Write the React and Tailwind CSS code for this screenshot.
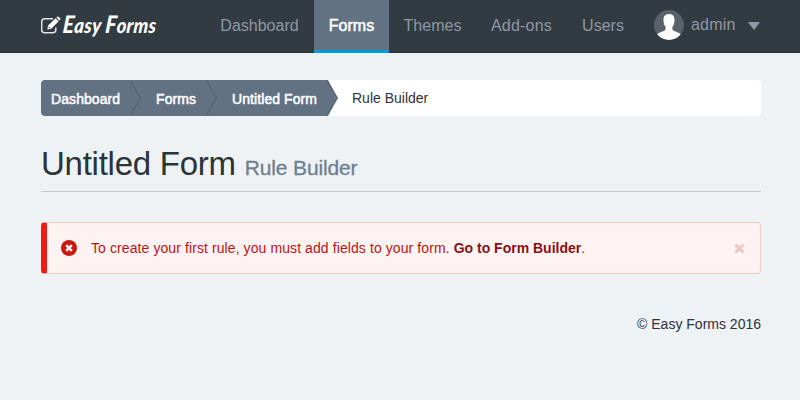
import React from "react";

function Logo() {
  return (
    <a className="flex h-[53px] w-[164px] items-center text-white">
      <svg className="mt-[-4px] h-[18px] w-5 shrink-0" viewBox="0 0 20 18" fill="none">
        <path d="M12 2.7H3.7Q.7 2.7.7 5.7v8.1q0 3 3 3h8.1q3 0 3-3v-2.4" stroke="#e3e5e7" strokeWidth="1.5" />
        <path d="M6.3 13.5l.8-4 7.5-7.3 3.1 3.1-7.4 7.4z" fill="#fff" />
        <path d="M15.4 1.5l.8-.8q.7-.6 1.4 0l1.6 1.6q.6.7 0 1.400l-.8.8z" fill="#fff" />
        <path d="M7.6 10.8l1.5 1.5" stroke="#323a42" strokeWidth="1" />
      </svg>
      <span className="ml-[2px] mt-[-4px] inline-block origin-left -skew-x-6 scale-x-[.88] whitespace-nowrap font-['Lato','Open_Sans',sans-serif] text-[21px] font-black italic leading-6 tracking-[0.3px]">
        <span className="text-[24px]">E</span>asy <span className="text-[24px]">F</span>orms
      </span>
    </a>
  );
}

function NavItem({ children, active, width }) {
  return (
    <a
      className={`flex h-[53px] items-center justify-center text-base ${width} ${
        active
          ? "border-b-[3px] border-[#009fda] bg-[#627282] pt-px text-white [-webkit-text-stroke:0.5px_white]"
          : "pb-px text-[#8f98a3]"
      }`}
    >
      {children}
    </a>
  );
}

function Chevron({ last }) {
  return (
    <svg className="h-9 w-3 shrink-0" viewBox="0 0 12 36">
      {last ? (
        <path d="M0 0L1 0L10.5 18L1 36H0z" fill="#627282" />
      ) : (
        <rect width="12" height="36" fill="#627282" />
      )}
      <path d="M.5 1L10.5 18L.5 35" fill="none" stroke="#4f5f6d" strokeWidth="1" />
    </svg>
  );
}

function Crumb({ children, width, last }) {
  return (
    <>
      <a className={`flex h-9 items-center whitespace-nowrap bg-[#627282] pt-[2px] text-sm tracking-[0.08px] text-white [-webkit-text-stroke:0.5px_white] ${width}`}>
        {children}
      </a>
      <Chevron last={last} />
    </>
  );
}

export default function App() {
  return (
    <div className="h-[400px] w-[800px] overflow-hidden bg-[#eef2f5] font-['Liberation_Sans',Arial,sans-serif] text-[#2b3338]">
      <header className="flex h-[53px] border-b border-[#2b3139] bg-[#323a42] pl-[41px]">
        <Logo />
        <nav className="flex">
          <NavItem width="w-[109px]">Dashboard</NavItem>
          <NavItem width="w-[75px]" active>Forms</NavItem>
          <NavItem width="w-[87px]">Themes</NavItem>
          <NavItem width="w-[91px] tracking-[0.2px]">Add-ons</NavItem>
          <NavItem width="w-[72px]">Users</NavItem>
        </nav>
        <div className="ml-[15px] flex h-[50px] items-center text-base text-[#8f98a3]">
          <svg className="h-[30px] w-[30px]" viewBox="0 0 30 30">
            <defs>
              <clipPath id="avatar"><circle cx="15" cy="15" r="15" /></clipPath>
            </defs>
            <g clipPath="url(#avatar)">
              <rect width="30" height="30" fill="#59616b" />
              <path d="M15 4c-3.900 0-5.700 2.500-5.500 6.200.1 3.300.9 5.200 2.100 6.600v2.800c-.6 1.600-6.800 2.600-9 5.400V30h24.800v-5c-2.200-2.800-8.400-3.800-9-5.400v-2.800c1.200-1.400 2-3.300 2.100-6.600.2-3.700-1.600-6.200-5.500-6.200z" fill="#fff" />
            </g>
          </svg>
          <span className="ml-[7px] tracking-[0.2px]">admin</span>
          <svg className="ml-3 mt-[2px] h-2 w-3" viewBox="0 0 12 8">
            <path d="M0 0h12L6 8z" fill="#8f98a3" />
          </svg>
        </div>
      </header>
      <main className="mx-auto w-[720px] translate-x-[1px] pt-[27px]">
        <div className="flex h-9 overflow-hidden rounded bg-white">
          <Crumb width="w-[89px] pl-[10px]">Dashboard</Crumb>
          <Crumb width="w-[64px] pl-[14px]">Forms</Crumb>
          <Crumb width="w-[109px] pl-[14px]" last>Untitled Form</Crumb>
          <span className="flex items-center pl-[13px] text-sm">Rule Builder</span>
        </div>
        <h1 className="flex h-[76px] items-baseline whitespace-nowrap border-b border-[#c3c9ce] pt-7 text-[33px] leading-[40px]">
          <span className="tracking-[-0.25px]">Untitled Form</span>
          <small className="ml-[9px] text-[21px] tracking-[-0.15px] text-[#6f7f90] [-webkit-text-stroke:0.3px_#6f7f90]">Rule Builder</small>
        </h1>
        <div className="mt-[30px] flex h-[52px] items-center rounded border border-l-[6px] border-[#f9c9c2] border-l-[#ee1c17] bg-[#fdf3f2] pr-[15px] text-sm text-[#c01212]">
          <svg className="ml-[14px] mt-[-1px] h-4 w-4" viewBox="0 0 16 16">
            <circle cx="8" cy="8" r="8" fill="#c9180f" />
            <path d="M5.200 5.200l5.600 5.600M10.800 5.200l-5.600 5.600" stroke="#fdf3f2" strokeWidth="2.500" />
          </svg>
          <p className="ml-[14px] whitespace-nowrap tracking-[0.09px]">
            To create your first rule, you must add fields to your form.{" "}
            <a className="font-bold tracking-[0px] text-[#8a1015]">Go to Form Builder</a>.
          </p>
          <svg className="ml-auto mt-[1px] h-[11px] w-[11px]" viewBox="0 0 11 11">
            <path d="M1.500 1.500l8 8M9.500 1.500l-8 8" stroke="#f2c5c2" strokeWidth="3" />
          </svg>
        </div>
        <footer className="mt-10 text-right text-sm">© Easy Forms 2016</footer>
      </main>
    </div>
  );
}
